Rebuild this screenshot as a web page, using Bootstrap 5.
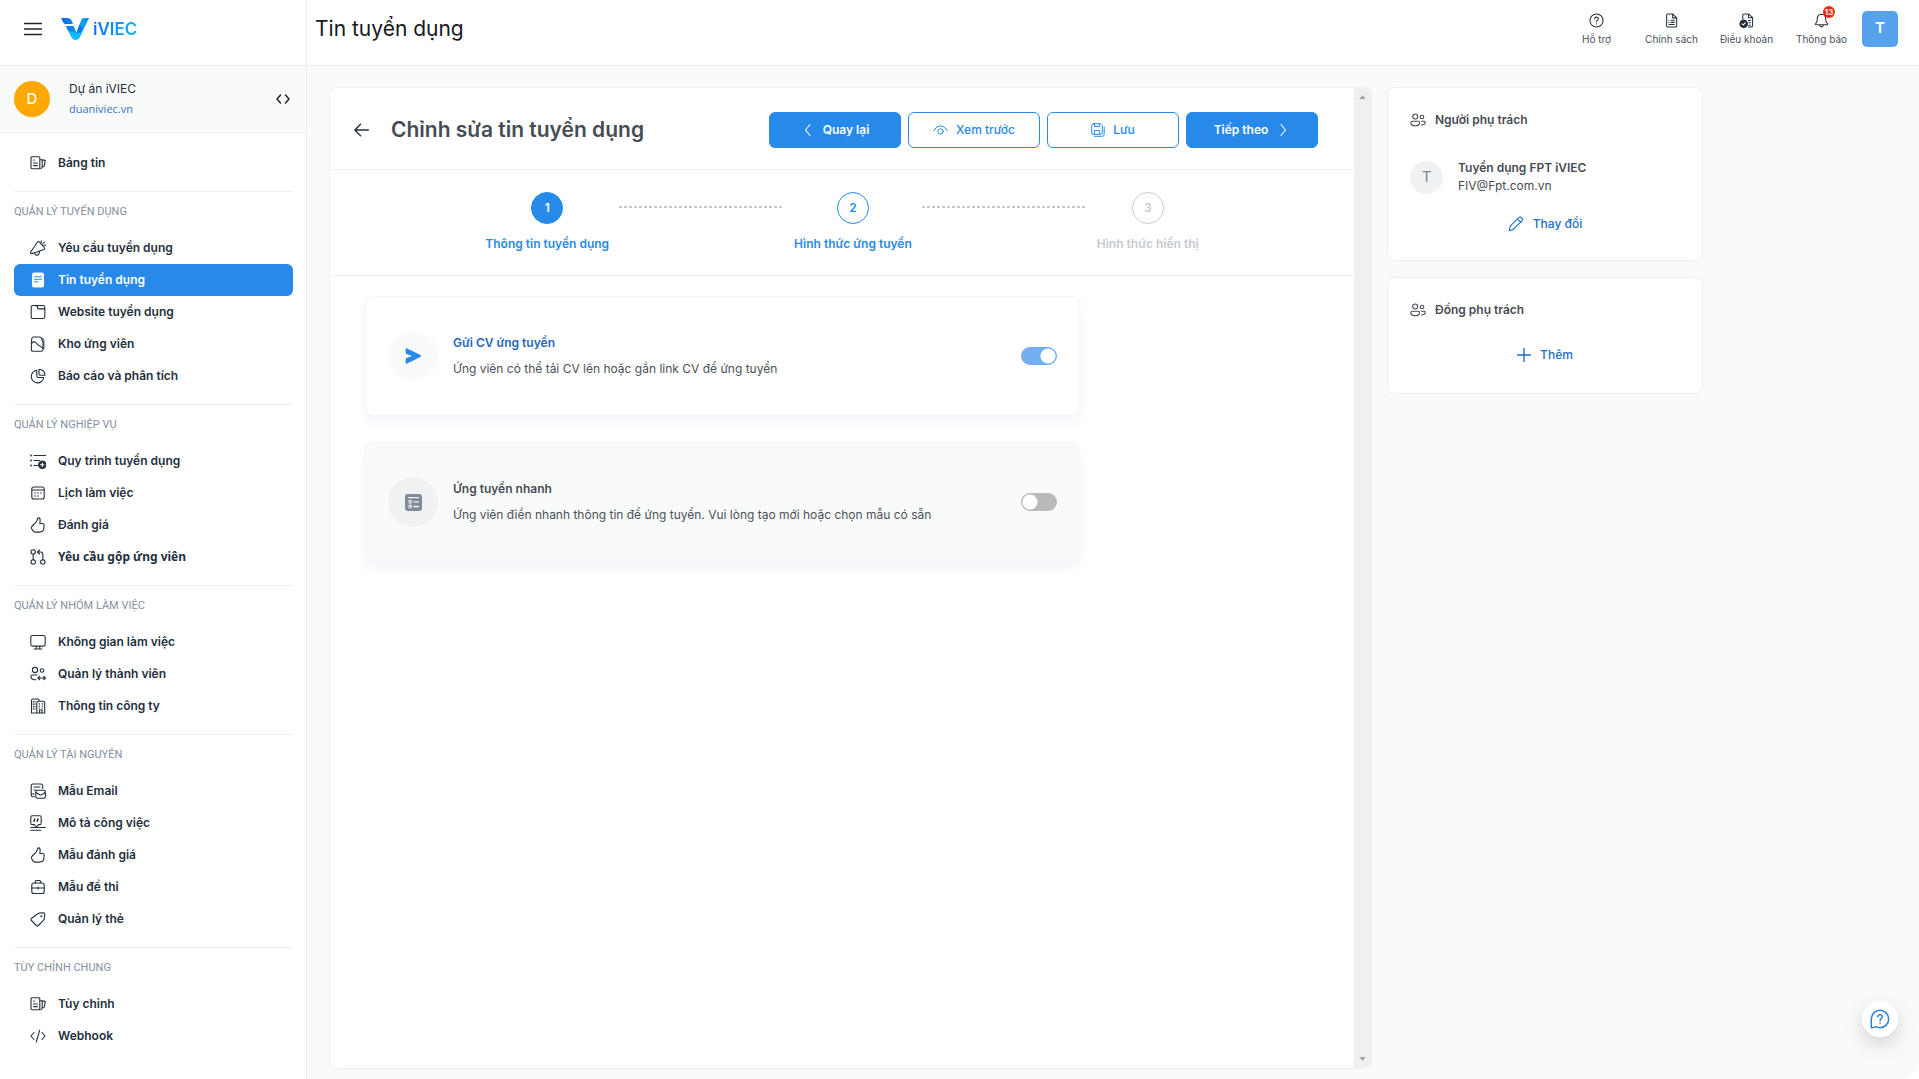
<!DOCTYPE html>
<html lang="vi">
<head>
<meta charset="utf-8">
<meta name="viewport" content="width=device-width, initial-scale=1">
<title>Tin tuyển dụng - iVIEC</title>
<link href="https://cdn.jsdelivr.net/npm/bootstrap@5.3.0/dist/css/bootstrap.min.css" rel="stylesheet">
<style>
:root{--brand:#278ae8;--brand-deep:#1a6fc9;--ink:#242f3d;--gray-ink:#464c53;--line:#edeff0;--canvas:#f9fafa}
body{font-family:Inter,"Noto Sans",sans-serif;font-size:12px;line-height:18px;color:var(--ink);background:#fff}
a{text-decoration:none;color:inherit}
svg{flex:none;fill:none;stroke:currentColor;stroke-width:1.1;stroke-linecap:round;stroke-linejoin:round}
.ico{width:16px;height:16px}
.app-side{width:307px;border-right:1px solid var(--line);background:#fff}
.side-top,.app-top{height:66px;border-bottom:1px solid var(--line);padding-bottom:8px}
.side-top{padding-left:24px;gap:19px}
.logo-word{font-size:17px;font-weight:600;line-height:22px;background:linear-gradient(90deg,#0d6efd,#0bb4fb);-webkit-background-clip:text;background-clip:text;color:transparent}
.side-org{height:67px;background:var(--canvas);border-bottom:1px solid var(--line);padding:0 16px 0 14px;gap:19px}
.org-dot{width:36px;height:36px;background:#ffa800;color:#fff;font-weight:500;font-size:15px}
.org-text{line-height:20px}
.org-url{font-family:"Open Sans",sans-serif;font-size:11px;color:#3a72c4}
.side-nav{padding:14px 13px 0 14px}
.nav-row{height:32px;padding:0 16px;gap:12px;border-radius:6px;font-weight:600}
.nav-row.on{background:var(--brand);color:#fff}
.nav-row.alt{font-family:"Noto Sans",sans-serif;font-weight:700}
.nav-sec{border-top:1px solid var(--line);padding:10px 0 12px}
.nav-sec:first-of-type{margin-top:12px}
.sec-title{font-family:Roboto,sans-serif;font-size:11px;font-weight:400;line-height:20px;margin-bottom:10px;color:#8290a0}
.page-title{font-size:21px;line-height:28px;font-weight:400;color:#16191d}
.app-top{padding-right:21px;background:#fff}
.top-link{width:75px;font-size:10px;line-height:14px;color:#4a515a;padding-top:2px}
.top-link svg{color:var(--ink)}
.bell-count{position:absolute;left:9px;top:-7px;width:12px;height:12px;border-radius:50%;background:#e22d13;color:#fff;font-size:8px;line-height:12px;font-weight:600;text-align:center}
.me{width:36px;height:36px;border-radius:5px;background:#56a3ec;color:#fff;font-weight:600;font-size:15px;margin-left:3px}
.canvas{background:var(--canvas);padding:21px 16px 10px 22px;border-bottom-right-radius:20px;min-height:0}
.canvas-in{max-width:1374px;gap:15px}
.panel{background:#fff;border:1px solid var(--line);border-radius:8px}
.editor-head{padding:24px 36px 21px 24px;gap:22px;border-bottom:1px solid var(--line)}
.editor-title{font-size:21px;line-height:28px;font-weight:600;color:var(--gray-ink)}
.act{width:132px;height:36px;border-radius:6px;font-size:12px;font-weight:600;line-height:18px;padding:0;border:1px solid var(--brand)}
.act-full{background:var(--brand);color:#fff}
.act-line{background:#fff;color:var(--brand);font-weight:500}
.acts{gap:7px}
.steps{gap:10px;padding:22px 0;border-bottom:1px solid var(--line)}
.step{font-weight:600;color:var(--brand);gap:11px}
.step-no{width:32px;height:32px;border-radius:50%;border:1px solid currentColor}
.step-no.done{background:var(--brand);color:#fff;border-color:var(--brand)}
.step.idle{color:#c6cad0}
.step-line{width:165px;height:2px;margin-top:14px;background:repeating-linear-gradient(90deg,#c4c8cd 0 3px,transparent 3px 5px)}
.ways{padding:20px 36px 0 35px}
.way{height:120px;border:1px solid #f0f6fc;border-radius:8px;padding:0 22px;background:#fff;box-shadow:0 6px 12px rgba(40,90,170,.06)}
.way+.way{margin-top:26px}
.way.off{background:var(--canvas)}
.way-ico{width:50px;height:50px;border-radius:50%;background:#f9fafa;color:var(--brand);margin-right:15px}
.off .way-ico{background:#f0f1f3;color:#7f8b9b}
.way-name{font-weight:600;color:#2567bd;margin-bottom:8px}
.off .way-name{color:var(--gray-ink)}
.way-note{color:#4a5159}
.way .form-check-input{width:36px;height:18px;margin:0;border:0;background-color:#b9bbbb;background-size:18px 18px;--bs-form-switch-bg:url("data:image/svg+xml,%3Csvg xmlns='http://www.w3.org/2000/svg' viewBox='-9 -9 18 18'%3E%3Ccircle r='7.6' fill='%23fff'/%3E%3C/svg%3E");box-shadow:none}
.way .form-check-input:checked{background-color:#72b0ef;--bs-form-switch-bg:url("data:image/svg+xml,%3Csvg xmlns='http://www.w3.org/2000/svg' viewBox='-9 -9 18 18'%3E%3Ccircle r='7.6' fill='%23fff'/%3E%3C/svg%3E")}
.rail{width:17px;background:#f0f0f0;border-radius:0 7px 7px 0;color:#a3a3a3;padding:7px 0}
.rail svg{width:7px;height:4px;fill:currentColor;stroke:none}
.aside-col{width:316px}
.aside-col .panel{padding:23px 22px 0}
.panel-name{font-size:12px;line-height:18px;font-weight:600;color:var(--gray-ink);gap:9px}
.owner-card{height:174px}
.co-card{height:117px;margin-top:16px}
.owner-dot{width:33px;height:33px;border-radius:50%;background:#f0f1f3;color:#7b8794;font-size:15px;margin-right:15px}
.owner{color:var(--gray-ink);margin-top:30px}
.text-act{border:0;background:none;padding:0;color:var(--brand-deep);font-size:12px;font-weight:500;gap:9px}
.owner-card .text-act{margin-top:20px}
.co-card .text-act{margin-top:27px}
.help-fab{position:fixed;right:21px;bottom:42px;width:36px;height:36px;border-radius:50%;border:0;background:#fff;color:#2a82da;box-shadow:0 8px 20px rgba(0,0,0,.16);padding:0}
</style>
</head>
<body class="d-flex vh-100 overflow-hidden">

<svg width="0" height="0" class="position-absolute" aria-hidden="true">
 <symbol id="i-board" viewBox="0 0 16 16"><path d="M2.2 1.7h6.6q1 0 1 1v11H2.2q-1.2 0-1.2-1.2V2.9q0-1.2 1.2-1.2zM9.8 4.8h2.4v6.5q0 2.2-1.2 2.4M12.2 4.9l3 .5-.7 5q-.4 1.8-2.3 1.2M3.6 5h.8M3.6 8h3.8M3.6 10.6h3.8"/></symbol>
 <symbol id="i-horn" viewBox="0 0 16 16"><path d="M7.200 2.200Q8.200.900 9.400 2.200L14.200 7.500q1 1.300-.4 2.100L4 12.900l-2.300.7q-1.600 0-1-1.800L3.500 8zM4.800 13.200q.4 2.300 2.400 2.100 2.200-.5 2.200-3.500M11 2.600l.5-1.700M12.700 4l1.700-2M13.900 5.500l1.700-.5"/></symbol>
 <symbol id="i-doc" viewBox="0 0 16 16"><rect x="2" y="0.500" width="12" height="15" rx="2" fill="currentColor" stroke="none"/><path stroke="#278ae8" d="M4.500 4.800h7M4.500 7.300h7M4.500 9.800h3.500"/></symbol>
 <symbol id="i-tab" viewBox="0 0 16 16"><rect x="1.200" y="1.500" width="13.600" height="13" rx="1.600"/><path d="M7.500 1.500V4q0 .9.900.9h6.400M5.500 1.500l2 1"/></symbol>
 <symbol id="i-store" viewBox="0 0 16 16"><path d="M3.300 1h6.400q1.400 0 1.800 1.400l1.500 4.100v7.200q0 1.600-1.600 1.600H3q-1.600 0-1.600-1.600V6.500l.4-3.900Q2 1 3.300 1zM1.400 7.500q2.400-2.800 4.300-1l2 2.200q1 1 2.600 1.300l2.700 3"/><path stroke-width=".9" d="M12 2.200q1.900.5 1.900 2v8.500"/></symbol>
 <symbol id="i-pie" viewBox="0 0 16 16"><path d="M6.800 2.300A6.300 6.300 0 1 0 13.800 9.500H8.300q-1.500 0-1.500-1.500zM9 1.300q5.500.3 6 5.700v.3h-4.600Q9 7.300 9 5.900z"/></symbol>
 <symbol id="i-flow" viewBox="0 0 16 16"><path d="M4 2.500h11.500M4 7.500h5.500M4 12.500h3.500"/><path stroke-width="1.800" d="M1 2.500h.01M1 7.500h.01M1 12.500h.01"/><circle cx="12.300" cy="11.700" r="3.700" fill="currentColor"/><path stroke="#fff" d="M12.300 10v3.400M10.600 11.700H14"/></symbol>
 <symbol id="i-cal" viewBox="0 0 16 16"><rect x="1.800" y="2" width="12.400" height="12" rx="2"/><path d="M1.800 5h12.400"/><path stroke-width="1.500" d="M5 8h.01M8 8h.01M11 8h.01M5 11h.01M8 11h.01"/></symbol>
 <symbol id="i-thumb" viewBox="0 0 16 16"><path d="M8.500.9q-1 .2-1.300 2Q6.800 5 4.300 7L2.200 9q-1.400 1.300-.5 2.800L3 13.900q.8 1.200 2.300 1.200h4q3.300.1 4.300-2l.5-4.400q.2-2.200-1.600-2.200H9.800Q10.400 3.700 10 2 9.600.8 8.500.9z"/></symbol>
 <symbol id="i-merge" viewBox="0 0 16 16"><circle cx="3.200" cy="3" r="2.200"/><circle cx="3.200" cy="13" r="2.200"/><circle cx="12.800" cy="13" r="2.200"/><path d="M3.200 5.200v5.600M12.800 10.800V5.200q0-2.200-2.200-2.200H7.800M9.500 1 7.500 3l2 2"/></symbol>
 <symbol id="i-screen" viewBox="0 0 16 16"><rect x=".8" y="1.500" width="14.400" height="10.600" rx="1.600"/><path d="M6.300 12.500v2.200M9.700 12.500v2.200M4 15h8"/></symbol>
 <symbol id="i-team" viewBox="0 0 16 16"><circle cx="5" cy="4" r="2.600"/><circle cx="12" cy="4.500" r="1.800"/><path d="M7 9H2.500Q.8 9 .9 10.800q.3 3 3.600 2.900H6M8 12h7.200M9.600 10.300 7.900 12l1.700 1.700M13.700 10.300l1.700 1.700-1.700 1.700"/></symbol>
 <symbol id="i-firm" viewBox="0 0 16 16"><path d="M1.500 15V2.500Q1.500 1 3 1h5q1 0 1 1.200M1.500 15h13M6.800 15V4.800q0-1.500 1.500-1.500h4.900q1.500 0 1.500 1.500V15M9.500 15v-3h2.500v3"/><path stroke-dasharray=".6 1.800" d="M3.300 3.500v9M5 3.500v9M9.300 5.600v5M12.200 5.600v5"/></symbol>
 <symbol id="i-mail" viewBox="0 0 16 16"><path d="M4.500 13.800H3q-1.800 0-1.800-1.800V3q0-2 2-2h7.500q2 0 2 2v2.500M1.500 11h2.700M4 4h6M4 7h2"/><rect x="5.800" y="7.300" width="9.600" height="8" rx="1.700"/><path d="m6 9.500 3.700 2.300q1 .5 2 0l3.600-2.300"/></symbol>
 <symbol id="i-quote" viewBox="0 0 16 16"><path d="M2.200.8h7.600q1.400 0 1.400 1.400v6q0 1.400-1.400 1.400H8.500L6.500 12 4.300 9.600H2.200Q.8 9.600.8 8.200v-6Q.8.800 2.200.800zM.8 12.500h14.500M.8 15.300h10"/><path stroke-width="1.500" d="M4.600 4v.8l-.6 1.500M7.800 4v.8l-.6 1.500"/></symbol>
 <symbol id="i-case" viewBox="0 0 16 16"><rect x="1.800" y="4" width="12.400" height="10.500" rx="2"/><path d="M5.300 4V2.600q0-1.100 1.100-1.100h3.200q1.100 0 1.100 1.100V4M1.800 9h12.400M8 8v2"/></symbol>
 <symbol id="i-tag" viewBox="0 0 16 16"><path d="M7.200 3.200q.9-1 2.200-1.100l4-.4q1.400 0 1.400 1.400l-.4 4q-.1 1.300-1 2.200l-5 5.200q-1 .9-2 0l-5-5q-.9-1 0-2z"/><circle cx="11.400" cy="5.200" r=".5"/></symbol>
 <symbol id="i-code" viewBox="0 0 16 16"><path d="M4 4.500.9 8 4 11.500M12 4.500 15.100 8 12 11.500M9.700 2.200 6.300 14"/></symbol>
 <symbol id="i-help" viewBox="0 0 16 16"><circle cx="8" cy="8" r="7"/><path d="M6 6.300q.1-1.900 2-1.900t2 1.800q0 1-1.100 1.700-.9.600-.9 1.500M8 11.600v.1"/></symbol>
 <symbol id="i-page" viewBox="0 0 16 16"><path d="M4.200 1h5L13.500 5.200v8.400q0 1.400-1.400 1.400H4.200q-1.400 0-1.400-1.400V2.400Q2.800 1 4.200 1zM9.200 1v4.200h4.300M7.500 7.800h3.500M7.500 10h3.500M5.300 12.300H11M5.200 7.800h.1M5.200 10h.1"/></symbol>
 <symbol id="i-terms" viewBox="0 0 16 16"><path d="M4 6.500V2.300Q4 1 5.300 1h4.800L14.500 5v8.700q0 1.300-1.300 1.300H10M10.100 1v4h4.400M10 8h2.300M10.500 10.500h1.800M10.500 13h1.800"/><circle cx="5" cy="11.500" r="4" fill="currentColor"/><path stroke="#fff" d="m3.300 11.600 1.200 1.200 2.200-2.300"/></symbol>
 <symbol id="i-bell" viewBox="0 0 16 16"><path d="M8 1.300q4.300.2 4.500 4.700 0 3 .9 4.200l1 1.300q.5.900-.6 1H2.200q-1.100-.1-.6-1l1-1.300Q3.500 9 3.500 6 3.700 1.500 8 1.300zM6 13q.3 1.800 2 1.800t2-1.800"/></symbol>
 <symbol id="i-people" viewBox="0 0 16 16"><circle cx="5.200" cy="4.500" r="2.500"/><circle cx="12" cy="5" r="1.800"/><path d="M2.300 9.300h5.900q1.500.1 1.400 1.600-.4 2.900-4.400 2.900T.8 10.900q0-1.500 1.500-1.600zM11.500 9.300h2.400q1.400.1 1.300 1.400-.3 2.300-3.700 2.300"/></symbol>
</svg>

<aside class="app-side flex-shrink-0 d-flex flex-column">
 <div class="side-top d-flex align-items-center">
  <button class="btn p-0 border-0 d-flex" type="button" aria-label="Menu"><svg width="18" height="16" viewBox="0 0 18 16"><path stroke-width="1.500" d="M.5 2.500h17M.5 8h17M.5 13.500h17"/></svg></button>
  <a href="#" class="d-flex align-items-center" aria-label="iVIEC">
   <svg width="28" height="22" viewBox="0 0 28 22"><defs><linearGradient id="lg1" x1="0" x2="1"><stop stop-color="#0a63e0"/><stop offset="1" stop-color="#0a9df5"/></linearGradient><linearGradient id="lg2" x1="0" y1="1" x2=".6" y2="0"><stop stop-color="#18c7ff"/><stop offset="1" stop-color="#0a9af6"/></linearGradient></defs><path stroke="none" fill="url(#lg2)" d="M5 8.500h5.500l5 6L20.500 1.500Q21.200 0 22.800 0H28L18.500 20Q17 22 14.500 22t-3.700-2z"/><path stroke="none" fill="url(#lg1)" d="M0 0h7q2.500.200 3.500 2.300L12 6H4.500Q3 6 2.300 4.500zM5 8h7.800l2.700 6.500q-5 .500-8.500-2z"/><path stroke="none" fill="#0876ea" d="m18.500 6.500 3 3-2.300 5-3.700.5z"/></svg>
   <span class="logo-word ms-1">iVIEC</span></a>
 </div>
 <div class="side-org d-flex align-items-center">
  <span class="org-dot rounded-circle d-flex align-items-center justify-content-center">D</span>
  <div class="org-text flex-grow-1">
   <div>Dự án iVIEC</div>
   <a class="org-url d-block" href="#">duaniviec.vn</a>
  </div>
  <button class="btn p-0 border-0 d-flex" type="button" aria-label="Đổi dự án"><svg width="14" height="10" viewBox="0 0 14 10"><path stroke-width="1.500" d="M4.500 1 1 5l3.500 4M9.500 1 13 5 9.500 9"/></svg></button>
 </div>
 <nav class="side-nav">
  <a class="nav-row d-flex align-items-center" href="#"><svg class="ico"><use href="#i-board"/></svg>Bảng tin</a>
  <section class="nav-sec"><h2 class="sec-title">QUẢN LÝ TUYỂN DỤNG</h2>
   <a class="nav-row d-flex align-items-center" href="#"><svg class="ico"><use href="#i-horn"/></svg>Yêu cầu tuyển dụng</a>
   <a class="nav-row on d-flex align-items-center" href="#" aria-current="page"><svg class="ico"><use href="#i-doc"/></svg>Tin tuyển dụng</a>
   <a class="nav-row d-flex align-items-center" href="#"><svg class="ico"><use href="#i-tab"/></svg>Website tuyển dụng</a>
   <a class="nav-row d-flex align-items-center" href="#"><svg class="ico"><use href="#i-store"/></svg>Kho ứng viên</a>
   <a class="nav-row d-flex align-items-center" href="#"><svg class="ico"><use href="#i-pie"/></svg>Báo cáo và phân tích</a>
  </section>
  <section class="nav-sec"><h2 class="sec-title">QUẢN LÝ NGHIỆP VỤ</h2>
   <a class="nav-row d-flex align-items-center" href="#"><svg class="ico"><use href="#i-flow"/></svg>Quy trình tuyển dụng</a>
   <a class="nav-row d-flex align-items-center" href="#"><svg class="ico"><use href="#i-cal"/></svg>Lịch làm việc</a>
   <a class="nav-row d-flex align-items-center" href="#"><svg class="ico"><use href="#i-thumb"/></svg>Đánh giá</a>
   <a class="nav-row alt d-flex align-items-center" href="#"><svg class="ico"><use href="#i-merge"/></svg>Yêu cầu gộp ứng viên</a>
  </section>
  <section class="nav-sec"><h2 class="sec-title">QUẢN LÝ NHÓM LÀM VIỆC</h2>
   <a class="nav-row d-flex align-items-center" href="#"><svg class="ico"><use href="#i-screen"/></svg>Không gian làm việc</a>
   <a class="nav-row d-flex align-items-center" href="#"><svg class="ico"><use href="#i-team"/></svg>Quản lý thành viên</a>
   <a class="nav-row d-flex align-items-center" href="#"><svg class="ico"><use href="#i-firm"/></svg>Thông tin công ty</a>
  </section>
  <section class="nav-sec"><h2 class="sec-title">QUẢN LÝ TÀI NGUYÊN</h2>
   <a class="nav-row d-flex align-items-center" href="#"><svg class="ico"><use href="#i-mail"/></svg>Mẫu Email</a>
   <a class="nav-row d-flex align-items-center" href="#"><svg class="ico"><use href="#i-quote"/></svg>Mô tả công việc</a>
   <a class="nav-row d-flex align-items-center" href="#"><svg class="ico"><use href="#i-thumb"/></svg>Mẫu đánh giá</a>
   <a class="nav-row d-flex align-items-center" href="#"><svg class="ico"><use href="#i-case"/></svg>Mẫu đề thi</a>
   <a class="nav-row d-flex align-items-center" href="#"><svg class="ico"><use href="#i-tag"/></svg>Quản lý thẻ</a>
  </section>
  <section class="nav-sec"><h2 class="sec-title">TÙY CHỈNH CHUNG</h2>
   <a class="nav-row d-flex align-items-center" href="#"><svg class="ico"><use href="#i-board"/></svg>Tùy chỉnh</a>
   <a class="nav-row d-flex align-items-center" href="#"><svg class="ico"><use href="#i-code"/></svg>Webhook</a>
  </section>
 </nav>
</aside>

<div class="flex-grow-1 d-flex flex-column">
 <header class="app-top d-flex align-items-center ps-2">
  <h1 class="page-title mb-0 me-auto">Tin tuyển dụng</h1>
  <a class="top-link d-flex flex-column align-items-center gap-1" href="#"><svg width="15" height="15"><use href="#i-help"/></svg>Hỗ trợ</a>
  <a class="top-link d-flex flex-column align-items-center gap-1" href="#"><svg width="15" height="15"><use href="#i-page"/></svg>Chính sách</a>
  <a class="top-link d-flex flex-column align-items-center gap-1" href="#"><svg width="15" height="15"><use href="#i-terms"/></svg>Điều khoản</a>
  <a class="top-link d-flex flex-column align-items-center gap-1" href="#"><span class="position-relative d-flex"><svg width="15" height="15"><use href="#i-bell"/></svg><span class="bell-count">13</span></span>Thông báo</a>
  <button class="me btn p-0 border-0" type="button">T</button>
 </header>

 <main class="canvas flex-grow-1 d-flex">
  <div class="canvas-in d-flex flex-grow-1">
   <section class="panel flex-grow-1 d-flex">
    <div class="flex-grow-1">
     <div class="editor-head d-flex align-items-center">
      <a href="#" class="d-flex" aria-label="Trở về"><svg width="15" height="14" viewBox="0 0 15 14"><path stroke-width="1.400" d="M14.300 7H1M6.500 1.300.9 7l5.600 5.700"/></svg></a>
      <h2 class="editor-title mb-0 me-auto">Chỉnh sửa tin tuyển dụng</h2>
      <div class="acts d-flex">
       <button type="button" class="btn act act-full d-flex align-items-center justify-content-center gap-2"><svg width="14" height="14" viewBox="0 0 14 14"><path d="M9 1.500 4.500 7 9 12.500"/></svg>Quay lại</button>
       <button type="button" class="btn act act-line d-flex align-items-center justify-content-center gap-2"><svg width="15" height="14" viewBox="0 0 15 14"><path stroke-width="1" d="M.8 7.500q2.500-4.700 6.700-4.700t6.700 4.700"/><circle cx="7.500" cy="8.500" r="2.700" stroke-width="1"/></svg>Xem trước</button>
       <button type="button" class="btn act act-line d-flex align-items-center justify-content-center gap-2"><svg width="14" height="14" viewBox="0 0 14 14"><path stroke-width="1" d="M2.500.7h6.800l2 2V10q0 1.300-1.300 1.300H2Q.7 11.300.7 10V2.500Q.7.700 2.500.700zM3.500.8v2.700h4.800V.8M3.300 11V7.500h5.400V11M13.200 4v7.300q0 2-2 2H3.500"/></svg>Lưu</button>
       <button type="button" class="btn act act-full d-flex align-items-center justify-content-center gap-2">Tiếp theo<svg width="14" height="14" viewBox="0 0 14 14"><path d="M5 1.500 9.500 7 5 12.500"/></svg></button>
      </div>
     </div>
     <div class="steps d-flex justify-content-center">
      <div class="step d-flex flex-column align-items-center"><span class="step-no done d-flex align-items-center justify-content-center">1</span>Thông tin tuyển dụng</div>
      <div class="step-line"></div>
      <div class="step d-flex flex-column align-items-center"><span class="step-no d-flex align-items-center justify-content-center">2</span>Hình thức ứng tuyển</div>
      <div class="step-line"></div>
      <div class="step idle d-flex flex-column align-items-center"><span class="step-no d-flex align-items-center justify-content-center">3</span>Hình thức hiển thị</div>
     </div>
     <div class="ways"><div class="row g-0"><div class="col-9">
      <div class="way d-flex align-items-center">
       <span class="way-ico d-flex align-items-center justify-content-center"><svg width="16" height="16" viewBox="0 0 16 16"><path stroke="none" fill="currentColor" d="M.8 0q7.500 3.300 14.700 7.100.7.900 0 1.700Q8.300 12.800.8 16 .2 14 1 10.300L7 8 1 5.700Q.2 2 .8 0z"/></svg></span>
       <label class="flex-grow-1" for="way-cv"><span class="way-name d-block">Gửi CV ứng tuyển</span><span class="way-note d-block">Ứng viên có thể tải CV lên hoặc gắn link CV để ứng tuyển</span></label>
       <div class="form-check form-switch p-0 m-0 d-flex align-items-center"><input class="form-check-input" type="checkbox" role="switch" id="way-cv" checked></div>
      </div>
      <div class="way off d-flex align-items-center">
       <span class="way-ico d-flex align-items-center justify-content-center"><svg width="17" height="17" viewBox="0 0 17 17"><rect width="17" height="17" rx="3" fill="currentColor" stroke="none"/><path stroke="#f0f1f3" stroke-width="1.300" d="M3.500 3.600h10M9 7.800h4.500M9 12.500h4.500"/><circle cx="5.200" cy="7.800" r="1.400" stroke="#f0f1f3"/><circle cx="5.200" cy="12.500" r="1.400" stroke="#f0f1f3"/></svg></span>
       <label class="flex-grow-1" for="way-fast"><span class="way-name d-block">Ứng tuyển nhanh</span><span class="way-note d-block">Ứng viên điền nhanh thông tin để ứng tuyển. Vui lòng tạo mới hoặc chọn mẫu có sẵn</span></label>
       <div class="form-check form-switch p-0 m-0 d-flex align-items-center"><input class="form-check-input" type="checkbox" role="switch" id="way-fast"></div>
      </div>
     </div></div></div>
    </div>
    <div class="rail d-flex flex-column justify-content-between align-items-center" aria-hidden="true"><svg viewBox="0 0 8 5"><path d="M0 5 4 0l4 5z"/></svg><svg viewBox="0 0 8 5"><path d="m0 0 4 5 4-5z"/></svg></div>
   </section>

   <aside class="aside-col flex-shrink-0">
    <section class="panel owner-card">
     <h3 class="panel-name d-flex align-items-center mb-0"><svg class="ico"><use href="#i-people"/></svg>Người phụ trách</h3>
     <div class="owner d-flex align-items-center">
      <span class="owner-dot d-flex align-items-center justify-content-center">T</span>
      <div><div class="fw-semibold">Tuyển dụng FPT iVIEC</div><div>FIV@Fpt.com.vn</div></div>
     </div>
     <div class="d-flex justify-content-center"><button type="button" class="text-act d-flex align-items-center"><svg class="ico" viewBox="0 0 16 16"><path d="M1.200 14.800 2 11q.2-.8.700-1.300l8-8q1.500-1.300 3 .1t.200 3l-8.200 8.100q-.5.500-1.200.7zM9.500 2.900l3.500 3.500"/></svg>Thay đổi</button></div>
    </section>
    <section class="panel co-card">
     <h3 class="panel-name d-flex align-items-center mb-0"><svg class="ico"><use href="#i-people"/></svg>Đồng phụ trách</h3>
     <div class="d-flex justify-content-center"><button type="button" class="text-act d-flex align-items-center"><svg width="14" height="14" viewBox="0 0 14 14"><path stroke-width="1.400" d="M7 .5v13M.5 7h13"/></svg>Thêm</button></div>
    </section>
   </aside>
  </div>
 </main>
</div>

<button type="button" class="help-fab d-flex align-items-center justify-content-center" aria-label="Trợ giúp"><svg width="20" height="20" viewBox="0 0 20 20"><path stroke-width="1.500" d="M1.300 18.700V10a8.700 8.700 0 1 1 8.700 8.700q-2 0-3.800-1-1.500 1-4.900 1zM7.700 7.700q.1-2 2.400-2t2.300 2.100q0 1-1.300 1.900-1 .8-1 2M10.100 14.100v.1"/></svg></button>

<script src="https://cdn.jsdelivr.net/npm/bootstrap@5.3.0/dist/js/bootstrap.bundle.min.js"></script>
</body>
</html>
